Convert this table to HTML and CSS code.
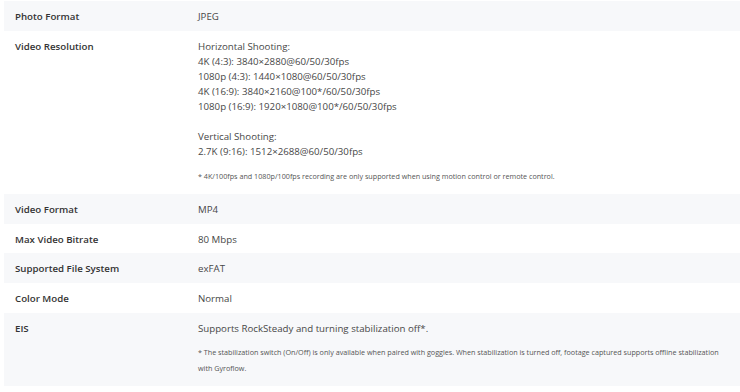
FILE: index.html
```html
<!DOCTYPE html>
<html lang="en">
<head>
<meta charset="utf-8">
<title>Specs</title>
<link rel="stylesheet" href="styles.css">
</head>
<body>
<div class="specs">
  <div class="row shaded">
    <div class="label">Photo Format</div>
    <div class="value">JPEG</div>
  </div>
  <div class="row">
    <div class="label">Video Resolution</div>
    <div class="value">
      <p>Horizontal Shooting:<br>4K (4:3): 3840×2880@60/50/30fps<br>1080p (4:3): 1440×1080@60/50/30fps<br>4K (16:9): 3840×2160@100*/60/50/30fps<br>1080p (16:9): 1920×1080@100*/60/50/30fps</p>
      <p class="gap">Vertical Shooting:<br>2.7K (9:16): 1512×2688@60/50/30fps</p>
      <p class="note note-wide">* 4K/100fps and 1080p/100fps recording are only supported when using motion control or remote control.</p>
    </div>
  </div>
  <div class="row shaded">
    <div class="label">Video Format</div>
    <div class="value">MP4</div>
  </div>
  <div class="row">
    <div class="label">Max Video Bitrate</div>
    <div class="value">80 Mbps</div>
  </div>
  <div class="row shaded">
    <div class="label">Supported File System</div>
    <div class="value">exFAT</div>
  </div>
  <div class="row">
    <div class="label">Color Mode</div>
    <div class="value">Normal</div>
  </div>
  <div class="row shaded">
    <div class="label">EIS</div>
    <div class="value">
      <p>Supports RockSteady and turning stabilization off*.</p>
      <p class="note">* The stabilization switch (On/Off) is only available when paired with goggles. When stabilization is turned off, footage captured supports offline stabilization with Gyroflow.</p>
    </div>
  </div>
</div>
</body>
</html>
```

FILE: styles.css
```css
html, body {
  margin: 0;
  padding: 0;
  background: #ffffff;
}

body {
  font-family: "Open Sans", "Noto Sans", sans-serif;
  font-size: 9.7px;
  line-height: 15px;
  color: #444;
}

.specs {
  padding: 1px 0 0 4px;
}

.row {
  display: grid;
  grid-template-columns: 194px 1fr;
  padding: 8px 0 6.75px;
}

.row.shaded {
  background: #f7f8fa;
}

.label {
  padding-left: 11px;
  font-weight: 600;
  color: #333;
}

.value {
  color: #474747;
  padding-right: 6px;
}

.value p {
  margin: 0;
}

.value p.gap {
  margin-top: 15px;
}

.value p.note {
  margin: 8px 0 2.25px;
  font-size: 7.2px;
  line-height: 16.5px;
  color: #555;
}

.value p.note-wide {
  margin-top: 9.5px;
}
```
